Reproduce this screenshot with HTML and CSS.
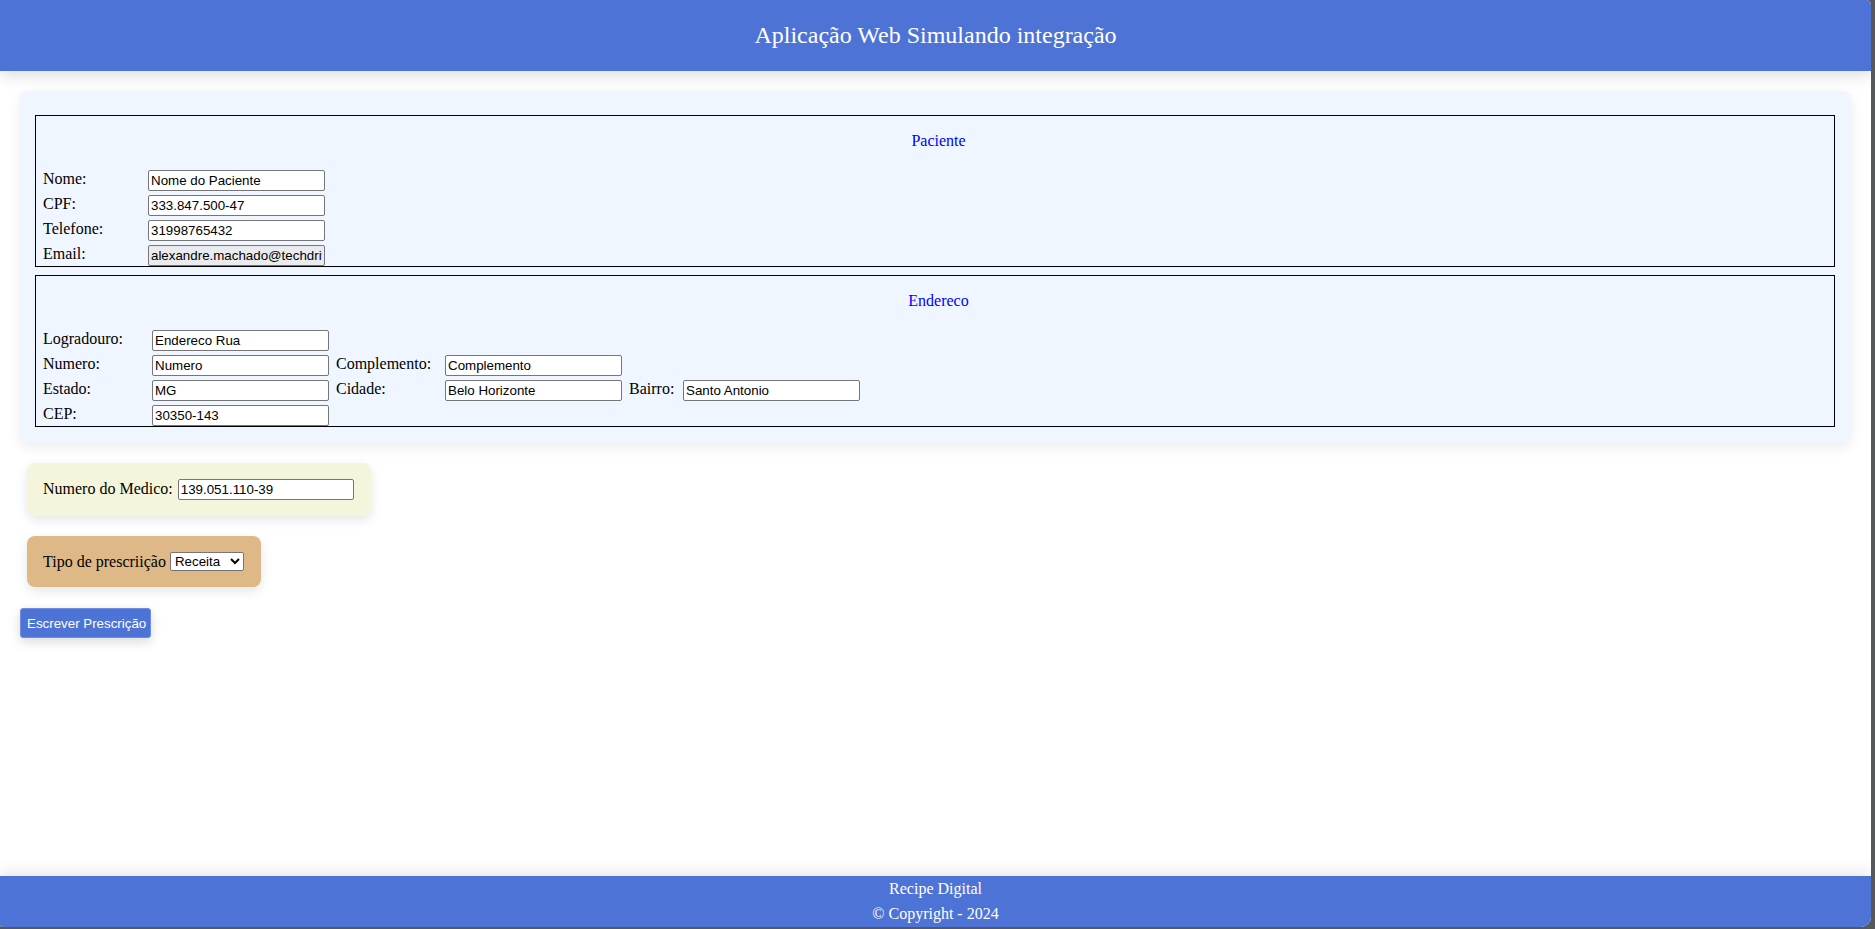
FILE: index.html
```html
<!DOCTYPE html>
<html lang="pt-BR">
<head>
<meta charset="utf-8">
<title>Aplicação Web Simulando integração</title>
<link rel="stylesheet" href="styles.css">
</head>
<body>
<div class="window">
  <header class="topbar">Aplicação Web Simulando integração</header>
  <main class="content">
    <section class="panel">
      <fieldset class="group">
        <p class="group-title">Paciente</p>
        <div class="grid grid-paciente">
          <label class="lbl">Nome:</label><input class="field" type="text" value="Nome do Paciente">
          <label class="lbl">CPF:</label><input class="field" type="text" value="333.847.500-47">
          <label class="lbl">Telefone:</label><input class="field" type="text" value="31998765432">
          <label class="lbl">Email:</label><input class="field field-ro" type="text" value="alexandre.machado@techdrive.com" readonly>
        </div>
      </fieldset>
      <fieldset class="group">
        <p class="group-title">Endereco</p>
        <div class="grid grid-endereco">
          <label class="lbl">Logradouro:</label><input class="field" type="text" value="Endereco Rua"><span></span><span></span><span></span><span></span>
          <label class="lbl">Numero:</label><input class="field" type="text" value="Numero"><label class="lbl">Complemento:</label><input class="field" type="text" value="Complemento"><span></span><span></span>
          <label class="lbl">Estado:</label><input class="field" type="text" value="MG"><label class="lbl">Cidade:</label><input class="field" type="text" value="Belo Horizonte"><label class="lbl">Bairro:</label><input class="field" type="text" value="Santo Antonio">
          <label class="lbl">CEP:</label><input class="field" type="text" value="30350-143"><span></span><span></span><span></span><span></span>
        </div>
      </fieldset>
    </section>

    <div class="box box-medico">
      <label class="lbl">Numero do Medico:</label><input class="field field-medico" type="text" value="139.051.110-39">
    </div>

    <div class="box box-tipo">
      <label class="lbl">Tipo de prescriição</label>
      <select class="select">
        <option>Receita</option>
        <option>Exame</option>
      </select>
    </div>

    <button class="btn" type="button">Escrever Prescrição</button>
  </main>
  <footer class="footer">
    <div class="footer-line">Recipe Digital</div>
    <div class="footer-line">© Copyright - 2024</div>
  </footer>
</div>
</body>
</html>
```

FILE: styles.css
```css
html, body {
  margin: 0;
  padding: 0;
}

body {
  background: #57585b;
  font-family: "Liberation Serif", "Times New Roman", serif;
  font-size: 16px;
  color: #000;
  height: 929px;
  overflow: hidden;
}

.window {
  width: calc(100% - 4px);
  height: 927px;
  background: #fff;
  display: flex;
  flex-direction: column;
  border-radius: 0 5px 10px 3px;
  overflow: hidden;
}

.topbar {
  flex: 0 0 71px;
  height: 71px;
  background: #4e73d6;
  color: #fff;
  font-size: 24px;
  display: flex;
  align-items: center;
  justify-content: center;
  box-shadow: 0 5px 14px rgba(0, 0, 0, 0.13);
  position: relative;
  z-index: 2;
}

.content {
  flex: 1 1 auto;
  padding: 20px 20px 0 20px;
  display: flex;
  flex-direction: column;
  align-items: flex-start;
}

.panel {
  align-self: stretch;
  background: #eff6ff;
  border-radius: 8px;
  padding: 24px 16px 16px 15px;
  box-shadow: 0 4px 14px rgba(0, 0, 0, 0.08);
  display: flex;
  flex-direction: column;
  gap: 8px;
}

.group {
  margin: 0;
  border: 1px solid #000;
  padding: 0 0 0 7px;
  min-width: 0;
}

.group-title {
  margin: 0;
  padding: 16px 0 20px 0;
  line-height: 18px;
  text-align: center;
  color: #0000ff;
}

.grid {
  display: grid;
  grid-auto-rows: 21px;
  row-gap: 4px;
  align-items: start;
}

.grid-paciente {
  grid-template-columns: 105px 177px;
}

.grid-endereco {
  grid-template-columns: 109px 184px 109px 184px 54px 177px;
}

.lbl {
  line-height: normal;
  white-space: nowrap;
}

.field {
  box-sizing: border-box;
  width: 177px;
  height: 21px;
  margin: 0;
  padding: 1px 2px;
  border: 1px solid #767676;
  border-radius: 2px;
  background: #fff;
  font-family: "Liberation Sans", Arial, sans-serif;
  font-size: 13.333px;
  color: #000;
}

.field-ro {
  background: #e9ebee;
}

.box {
  margin: 20px 0 0 7px;
  padding: 16px 17px 16px 16px;
  border-radius: 8px;
  box-shadow: 0 4px 12px rgba(0, 0, 0, 0.1);
  display: flex;
  align-items: baseline;
  gap: 5px;
}

.box-medico {
  background: #f5f5dc;
}

.field-medico {
  width: 176px;
}

.box-tipo {
  background: #deb887;
  padding: 16px 17px 16px 16px;
  height: 19px;
  align-items: center;
  gap: 4px;
}

.select {
  box-sizing: border-box;
  width: 74px;
  height: 19px;
  margin: 0;
  border: 1px solid #767676;
  border-radius: 2px;
  background: #fff;
  font-family: "Liberation Sans", Arial, sans-serif;
  font-size: 13.333px;
  color: #000;
}

.btn {
  margin: 21px 0 0 0;
  box-sizing: border-box;
  width: 131px;
  height: 30px;
  padding: 0 6px;
  border: 1px solid #6f8ee0;
  border-radius: 3px;
  background: #4e73d6;
  color: #fff;
  font-family: "Liberation Sans", Arial, sans-serif;
  font-size: 13.333px;
  box-shadow: 0 4px 12px rgba(0, 0, 0, 0.15);
  white-space: nowrap;
}

.footer {
  flex: 0 0 51px;
  height: 51px;
  background: #4e73d6;
  color: #fff;
  text-align: center;
  box-shadow: 0 -5px 14px rgba(0, 0, 0, 0.09);
  position: relative;
  z-index: 2;
}

.footer-line {
  line-height: 25px;
}
```
